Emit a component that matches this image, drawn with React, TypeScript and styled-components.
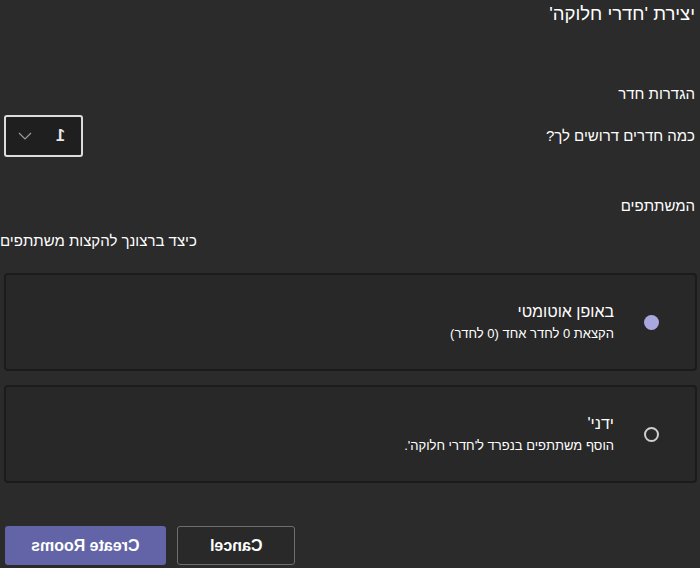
import React from "react";
import styled, { createGlobalStyle } from "styled-components";

const Global = createGlobalStyle`
  html, body { margin: 0; padding: 0; background: #2b2b2b; }
  body { font-family: "Liberation Sans", "DejaVu Sans", sans-serif; color: #ffffff; }
`;

const Page = styled.div`
  direction: rtl;
  width: 700px;
  height: 568px;
  box-sizing: border-box;
  padding: 3px 5px 0 3px;
  display: flex;
  flex-direction: column;
  background: #2b2b2b;
  overflow: hidden;
`;

const Title = styled.h1`
  margin: 0;
  font-size: 18.5px;
  font-weight: 400;
  line-height: 22px;
  color: #ffffff;
`;

const Heading = styled.div<{ $top: number }>`
  margin-top: ${(p) => p.$top}px;
  font-size: 15px;
  line-height: 18px;
  color: #ffffff;
`;

const Row = styled.div`
  margin-top: 12px;
  display: flex;
  align-items: center;
  justify-content: space-between;
`;

const Label = styled.span`
  font-size: 15px;
  line-height: 18px;
`;

const Select = styled.div`
  width: 79px;
  height: 42px;
  box-sizing: border-box;
  margin-left: 1px;
  border: 2px solid #dcdcdc;
  border-radius: 3px;
  background: #1f1f1f;
  display: flex;
  align-items: center;
  justify-content: space-between;
  padding: 0 16px 0 12px;
`;

const Mirrored = styled.span`
  display: inline-block;
  transform: scaleX(-1);
`;

const SelectValue = styled(Mirrored)`
  font-size: 16px;
  font-weight: 700;
  color: #e8e8e8;
`;

const Prompt = styled.div`
  margin-top: 17px;
  margin-left: -3px;
  align-self: flex-end;
  font-size: 15px;
  line-height: 18px;
`;

const Options = styled.div`
  margin-top: 23px;
  display: flex;
  flex-direction: column;
  gap: 14px;
  margin-left: 1px;
  margin-right: -2px;
`;

const Card = styled.label`
  height: 98px;
  box-sizing: border-box;
  border: 2px solid #1b1b1b;
  border-radius: 4px;
  background: #282828;
  display: flex;
  align-items: center;
  padding-right: 36px;
  gap: 30px;
`;

const Radio = styled.span<{ $checked: boolean }>`
  width: 15px;
  height: 15px;
  box-sizing: border-box;
  border-radius: 50%;
  flex: none;
  background: ${(p) => (p.$checked ? "#a9a7de" : "transparent")};
  border: ${(p) => (p.$checked ? "none" : "2px solid #cfcfcf")};
`;

const CardText = styled.div`
  display: flex;
  flex-direction: column;
  gap: 5px;
`;

const OptionTitle = styled.span`
  font-size: 16px;
  line-height: 19px;
  color: #ffffff;
`;

const OptionHint = styled.span`
  font-size: 13px;
  line-height: 16px;
  color: #ffffff;
`;

const Actions = styled.div`
  margin-top: 43px;
  display: flex;
  justify-content: flex-end;
  gap: 11px;
  margin-left: 2px;
`;

const Button = styled.button<{ $primary?: boolean }>`
  height: 39px;
  width: ${(p) => (p.$primary ? 161 : 118)}px;
  box-sizing: border-box;
  border-radius: 3px;
  border: ${(p) => (p.$primary ? "none" : "1px solid #6e6e6e")};
  background: ${(p) => (p.$primary ? "#6264a7" : "#292929")};
  color: #ffffff;
  font-family: "Liberation Sans", sans-serif;
  font-size: 16px;
  font-weight: 700;
  cursor: pointer;
`;

const Chevron = () => (
  <svg width="14" height="8" viewBox="0 0 14 8" fill="none">
    <path d="M1 1l6 6 6-6" stroke="#9a9a9a" strokeWidth="1.2" />
  </svg>
);

export default function App() {
  return (
    <>
      <Global />
      <Page>
        <Title>יצירת 'חדרי חלוקה'</Title>
        <Heading $top={60}>הגדרות חדר</Heading>
        <Row>
          <Label>כמה חדרים דרושים לך?</Label>
          <Select>
            <SelectValue>1</SelectValue>
            <Chevron />
          </Select>
        </Row>
        <Heading $top={40}>המשתתפים</Heading>
        <Prompt>כיצד ברצונך להקצות משתתפים</Prompt>
        <Options>
          <Card>
            <Radio $checked />
            <CardText>
              <OptionTitle>באופן אוטומטי</OptionTitle>
              <OptionHint>הקצאת 0 לחדר אחד (0 לחדר)</OptionHint>
            </CardText>
          </Card>
          <Card>
            <Radio $checked={false} />
            <CardText>
              <OptionTitle>ידני'</OptionTitle>
              <OptionHint>הוסף משתתפים בנפרד ל'חדרי חלוקה'.</OptionHint>
            </CardText>
          </Card>
        </Options>
        <Actions>
          <Button>
            <Mirrored>Cancel</Mirrored>
          </Button>
          <Button $primary>
            <Mirrored>Create Rooms</Mirrored>
          </Button>
        </Actions>
      </Page>
    </>
  );
}
